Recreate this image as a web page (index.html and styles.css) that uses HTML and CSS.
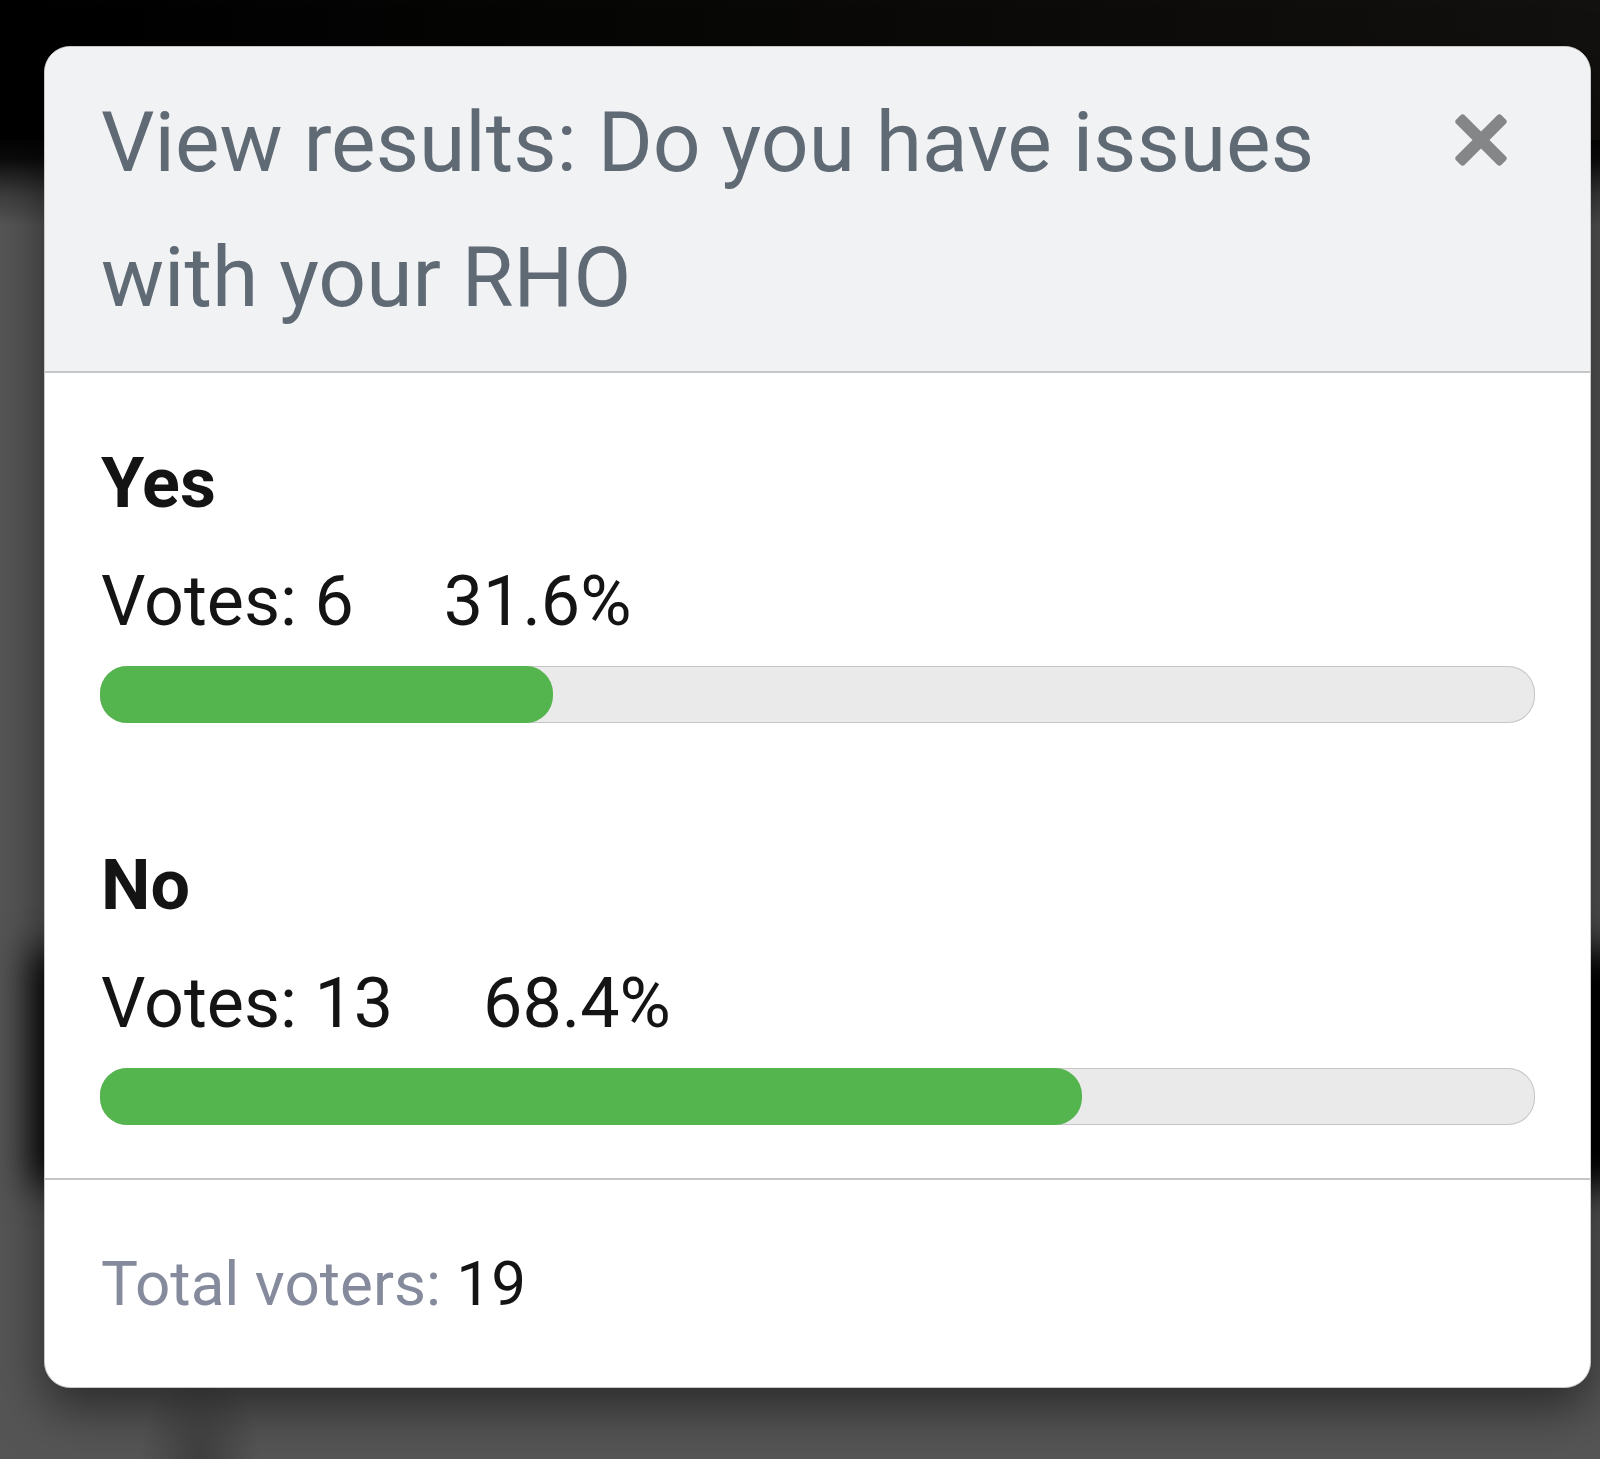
FILE: index.html
```html
<!DOCTYPE html>
<html lang="en">
<head>
<meta charset="utf-8">
<meta name="viewport" content="width=device-width, initial-scale=1">
<title>View results</title>
<link rel="stylesheet" href="styles.css">
</head>
<body class="page">
<main class="overlay">
  <section class="modal" role="dialog" aria-labelledby="modal-title">
    <header class="modal-header">
      <h1 class="modal-title" id="modal-title">View results: Do you have issues with your RHO</h1>
      <button class="close" type="button" aria-label="Close">
        <svg class="close-icon" viewBox="0 0 54 54" aria-hidden="true">
          <rect x="-5" y="21" width="64" height="12" rx="3" transform="rotate(45 27 27)"/>
          <rect x="-5" y="21" width="64" height="12" rx="3" transform="rotate(-45 27 27)"/>
        </svg>
      </button>
    </header>
    <div class="results">
      <article class="option">
        <h2 class="option-name">Yes</h2>
        <p class="option-stats"><span>Votes: 6</span><span>31.6%</span></p>
        <div class="bar" role="progressbar" aria-label="Yes" aria-valuenow="31.6" aria-valuemin="0" aria-valuemax="100">
          <div class="bar-fill" style="width: 31.6%"></div>
        </div>
      </article>
      <article class="option">
        <h2 class="option-name">No</h2>
        <p class="option-stats"><span>Votes: 13</span><span>68.4%</span></p>
        <div class="bar" role="progressbar" aria-label="No" aria-valuenow="68.4" aria-valuemin="0" aria-valuemax="100">
          <div class="bar-fill" style="width: 68.4%"></div>
        </div>
      </article>
    </div>
    <footer class="modal-footer"><span class="total-label">Total voters:</span> 19</footer>
  </section>
</main>
</body>
</html>
```
FILE: styles.css
```css
* {
  box-sizing: border-box;
}

.page {
  margin: 0;
  background: #555;
  color: #141414;
  font-family: Roboto, "Liberation Sans", sans-serif;
}

.overlay {
  position: relative;
  min-height: 100vh;
  padding: 46px 9px 72px 44px;
  overflow: hidden;
  background:
    radial-gradient(ellipse 60px 90px at 200px 100%, rgba(30, 30, 30, 0.4), transparent),
    linear-gradient(90deg, #000, #12110f) 0 0 / 100% 140px no-repeat,
    linear-gradient(#040404 140px, #0a0a0a 158px, #3c3c3c 194px, #555 225px);
}

/* Blurred dark strip of the page behind the dialog */
.overlay::before {
  content: "";
  position: absolute;
  top: 950px;
  right: -40px;
  left: 32px;
  height: 236px;
  background: #000;
  filter: blur(18px);
}

.modal {
  position: relative;
  border: 1px solid #c8c8c8;
  border-radius: 26px;
  background: #fff;
  box-shadow: 0 20px 50px rgba(0, 0, 0, 0.5);
  overflow: hidden;
}

.modal-header {
  display: flex;
  align-items: flex-start;
  justify-content: space-between;
  gap: 48px;
  padding: 28px 82px 26px 56px;
  border-bottom: 2px solid #c4c5c6;
  background: #f1f2f4;
}

.modal-title {
  margin: 0;
  color: #606a75;
  font-size: 84px;
  font-weight: 400;
  line-height: 135px;
}

.close {
  flex: none;
  margin: 38px 0 0;
  padding: 0;
  border: 0;
  background: none;
  color: #858688;
  cursor: pointer;
}

.close-icon {
  display: block;
  width: 54px;
  height: 54px;
  fill: currentColor;
}

.results {
  display: grid;
  gap: 103px;
  padding: 51px 55px 53px;
}

.option-name,
.option-stats {
  margin: 0;
  padding-left: 1px;
  font-size: 70px;
  line-height: 118px;
}

.option-name {
  font-weight: 700;
}

.option-stats {
  display: flex;
  gap: 90px;
}

.bar {
  height: 57px;
  margin-top: 6px;
  border-radius: 27px;
  background: #eaeaea;
  box-shadow: inset 0 0 0 1px #c6c6c6;
}

.bar-fill {
  height: 100%;
  border-radius: 27px;
  background: #54b44e;
}

.modal-footer {
  padding: 52px 56px;
  border-top: 2px solid #c4c5c6;
  font-size: 62px;
  line-height: 103px;
}

.total-label {
  color: #858b9c;
}
```
